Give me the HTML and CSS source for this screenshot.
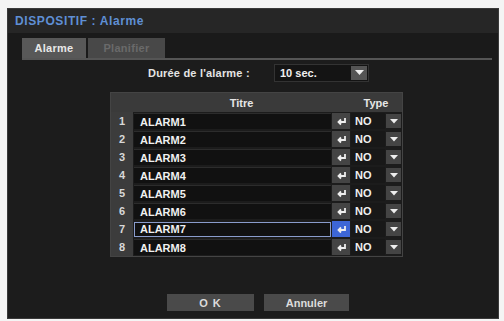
FILE: index.html
```html
<!DOCTYPE html>
<html>
<head>
<meta charset="utf-8">
<link rel="stylesheet" href="styles.css">
</head>
<body>
<div class="win">
  <div class="titlebar"><span class="title">DISPOSITIF : Alarme</span></div>
  <div class="tabzone">
    <div class="tabs">
      <div class="tab active">Alarme</div>
      <div class="tab dim">Planifier</div>
    </div>
  </div>
  <div class="content">
    <div class="duration">
      <span class="dlabel">Durée de l'alarme :</span>
      <div class="select"><span class="sval">10 sec.</span><span class="sbtn"><svg width="9" height="6" viewBox="0 0 9 6"><path d="M0 0h9L4.5 5z" fill="#eee"/></svg></span></div>
    </div>
    <div class="table">
      <div class="thead">
        <span class="th-num"></span>
        <span class="th-title">Titre</span>
        <span class="th-type">Type</span>
      </div>
      <div class="row"><span class="num">1</span><span class="name">ALARM1</span><span class="ico"><svg width="11" height="9" viewBox="0 0 11 9"><path d="M9 1v4H2.5M5 2.5L2.5 5 5 7.5" stroke="#eee" stroke-width="1.8" fill="none"/></svg></span><span class="type">NO</span><span class="dd"><svg width="8" height="5" viewBox="0 0 8 5"><path d="M0 0h8L4 4.5z" fill="#eee"/></svg></span></div>
      <div class="row"><span class="num">2</span><span class="name">ALARM2</span><span class="ico"><svg width="11" height="9" viewBox="0 0 11 9"><path d="M9 1v4H2.5M5 2.5L2.5 5 5 7.5" stroke="#eee" stroke-width="1.8" fill="none"/></svg></span><span class="type">NO</span><span class="dd"><svg width="8" height="5" viewBox="0 0 8 5"><path d="M0 0h8L4 4.5z" fill="#eee"/></svg></span></div>
      <div class="row"><span class="num">3</span><span class="name">ALARM3</span><span class="ico"><svg width="11" height="9" viewBox="0 0 11 9"><path d="M9 1v4H2.5M5 2.5L2.5 5 5 7.5" stroke="#eee" stroke-width="1.8" fill="none"/></svg></span><span class="type">NO</span><span class="dd"><svg width="8" height="5" viewBox="0 0 8 5"><path d="M0 0h8L4 4.5z" fill="#eee"/></svg></span></div>
      <div class="row"><span class="num">4</span><span class="name">ALARM4</span><span class="ico"><svg width="11" height="9" viewBox="0 0 11 9"><path d="M9 1v4H2.5M5 2.5L2.5 5 5 7.5" stroke="#eee" stroke-width="1.8" fill="none"/></svg></span><span class="type">NO</span><span class="dd"><svg width="8" height="5" viewBox="0 0 8 5"><path d="M0 0h8L4 4.5z" fill="#eee"/></svg></span></div>
      <div class="row"><span class="num">5</span><span class="name">ALARM5</span><span class="ico"><svg width="11" height="9" viewBox="0 0 11 9"><path d="M9 1v4H2.5M5 2.5L2.5 5 5 7.5" stroke="#eee" stroke-width="1.8" fill="none"/></svg></span><span class="type">NO</span><span class="dd"><svg width="8" height="5" viewBox="0 0 8 5"><path d="M0 0h8L4 4.5z" fill="#eee"/></svg></span></div>
      <div class="row"><span class="num">6</span><span class="name">ALARM6</span><span class="ico"><svg width="11" height="9" viewBox="0 0 11 9"><path d="M9 1v4H2.5M5 2.5L2.5 5 5 7.5" stroke="#eee" stroke-width="1.8" fill="none"/></svg></span><span class="type">NO</span><span class="dd"><svg width="8" height="5" viewBox="0 0 8 5"><path d="M0 0h8L4 4.5z" fill="#eee"/></svg></span></div>
      <div class="row sel"><span class="num">7</span><span class="name">ALARM7</span><span class="ico"><svg width="11" height="9" viewBox="0 0 11 9"><path d="M9 1v4H2.5M5 2.5L2.5 5 5 7.5" stroke="#eee" stroke-width="1.8" fill="none"/></svg></span><span class="type">NO</span><span class="dd"><svg width="8" height="5" viewBox="0 0 8 5"><path d="M0 0h8L4 4.5z" fill="#eee"/></svg></span></div>
      <div class="row"><span class="num">8</span><span class="name">ALARM8</span><span class="ico"><svg width="11" height="9" viewBox="0 0 11 9"><path d="M9 1v4H2.5M5 2.5L2.5 5 5 7.5" stroke="#eee" stroke-width="1.8" fill="none"/></svg></span><span class="type">NO</span><span class="dd"><svg width="8" height="5" viewBox="0 0 8 5"><path d="M0 0h8L4 4.5z" fill="#eee"/></svg></span></div>
    </div>
    <div class="buttons">
      <div class="btn ok">O K</div>
      <div class="btn cancel">Annuler</div>
    </div>
  </div>
</div>
</body>
</html>
```
FILE: styles.css
```css
html, body {
  margin: 0;
  padding: 0;
  background: #f4f4f4;
}
body {
  padding: 8px 0 0 7px;
  font-family: "Liberation Sans", Arial, sans-serif;
  font-weight: bold;
  font-size: 11px;
}
.win {
  width: 490px;
  height: 309px;
  background: #1c1c1c;
  border: 1px solid #3a3a3a;
  display: flex;
  flex-direction: column;
}
.titlebar {
  height: 24px;
  background: #262626;
  display: flex;
  align-items: center;
  padding-left: 7px;
}
.title {
  color: #5f8fd4;
  font-size: 12px;
  letter-spacing: 0.6px;
}
.tabzone {
  background: #1a1a1a;
  padding: 5px 6px 0 14px;
}
.tabs {
  display: flex;
  gap: 2px;
  border-bottom: 2px solid #555;
}
.tab {
  height: 20px;
  display: flex;
  align-items: center;
  justify-content: center;
  font-size: 11px;
  letter-spacing: 0.3px;
}
.tab.active {
  width: 64px;
  background: #585858;
  color: #e8e8e8;
}
.tab.dim {
  width: 77px;
  background: #484848;
  color: #6a6a6a;
}
.content {
  flex: 1;
  display: flex;
  flex-direction: column;
  align-items: flex-start;
}
.duration {
  display: flex;
  align-items: center;
  margin: 4px 0 0 140px;
  height: 17px;
}
.dlabel {
  color: #e4e4e4;
  width: 126px;
  font-size: 11px;
  letter-spacing: 0.2px;
}
.select {
  width: 93px;
  height: 16px;
  background: #141414;
  border: 1px solid #333;
  display: flex;
  align-items: center;
  justify-content: space-between;
}
.sval {
  color: #f0f0f0;
  padding-left: 5px;
}
.sbtn {
  width: 16px;
  height: 14px;
  margin-right: 1px;
  background: #555;
  display: flex;
  align-items: center;
  justify-content: center;
}
.table {
  margin: 11px 0 0 102px;
  width: 291px;
  background: #1c1c1c;
  border: 1px solid #444;
}
.thead {
  height: 19px;
  background: #3a3a3a;
  display: grid;
  grid-template-columns: 22px 217px 52px;
  align-items: center;
  color: #e6e6e6;
}
.th-title, .th-type {
  text-align: center;
}
.row {
  height: 18px;
  display: grid;
  grid-template-columns: 22px 197px 18px 34px 15px;
  column-gap: 1px;
  align-items: center;
  color: #f0f0f0;
}
.num {
  height: 18px;
  background: #3c3c3c;
  color: #d8d8d8;
  display: flex;
  align-items: center;
  justify-content: center;
}
.name {
  height: 15px;
  background: #111;
  border-top: 1px solid #2c2c2c;
  display: flex;
  align-items: center;
  padding-left: 6px;
}
.ico {
  height: 16px;
  background: #444;
  display: flex;
  align-items: center;
  justify-content: center;
}
.type {
  height: 16px;
  display: flex;
  align-items: center;
  padding-left: 4px;
  background: #181818;
}
.dd {
  height: 14px;
  background: #444;
  display: flex;
  align-items: center;
  justify-content: center;
}
.row.sel .name {
  height: 13px;
  border: 1px solid #8a9ccc;
  padding-left: 5px;
}
.row.sel .ico {
  background: #3d66d6;
}
.buttons {
  display: flex;
  gap: 10px;
  margin: 37px 0 0 159px;
}
.btn {
  height: 17px;
  background: #4a4a4a;
  color: #dcdcdc;
  display: flex;
  align-items: center;
  justify-content: center;
  font-size: 11px;
}
.btn.ok {
  width: 87px;
  letter-spacing: 1px;
}
.btn.cancel {
  width: 85px;
}
```
